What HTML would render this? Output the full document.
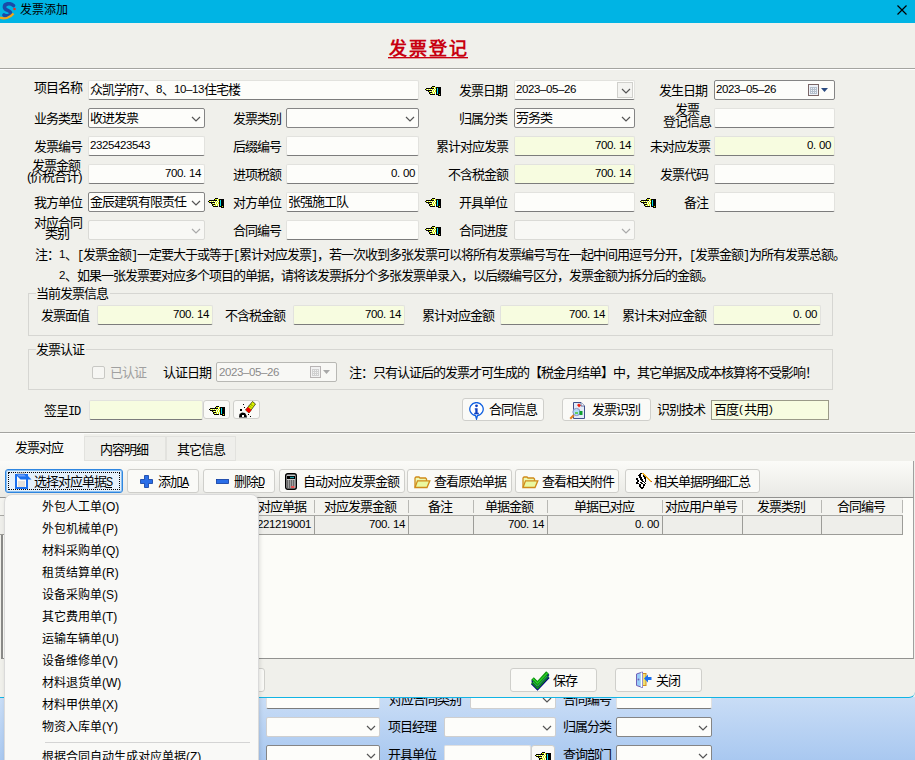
<!DOCTYPE html><html lang="zh-CN"><head><meta charset="utf-8"><style>
*{margin:0;padding:0;box-sizing:border-box}
html,body{width:915px;height:760px;overflow:hidden;background:#f0f0eb;font-family:"Liberation Sans",sans-serif;font-size:12px;line-height:12px;color:#000}
.a{position:absolute}
.t{white-space:nowrap;font-size:13px;line-height:12px;letter-spacing:-1px}
.m{font-family:"Liberation Mono",monospace;letter-spacing:-1.2px;font-size:12px;position:relative;top:0}
.n{font-size:11.5px;letter-spacing:-0.39px;position:relative;top:-1px}
.n.p{letter-spacing:2.8px}
.n.h{letter-spacing:0;padding:0 1.08px}
.n.sp{letter-spacing:2.8px}
.tb{border:1px solid #e2e2de;border-bottom:1px solid #7c7c7c;border-radius:2px}
.cb{border:1px solid #858585;border-radius:2px;background:#fdfdfa}
.cbd{border:1px solid #dadad6;border-radius:2px;background:#f8f8f5}
.btn{border:1px solid #cfcfcb;border-radius:3px;background:#fafaf7}
.btnf{border:1px solid #2f86e0;border-radius:3px;background:#e5f0fb;box-shadow:inset 0 0 0 1px #8cc0f0;outline:1px dotted #000;outline-offset:-4px}
.grp{border:1px solid #d6d6d2}
.menu{font-size:13px;line-height:13px;color:#000}
</style></head><body>
<div class="a " style="left:0px;top:697px;width:915px;height:63px;background:linear-gradient(#c9ddf6,#a9c8f0);"></div>
<div class="a " style="left:0px;top:0px;width:915px;height:698px;background:#f0f0eb;border-bottom:1px solid #12b4e4;border-bottom-right-radius:6px;"></div>
<div class="a " style="left:0px;top:0px;width:915px;height:23px;background:#00b4e4;"></div>
<svg class="a" style="left:0;top:2px" width="17" height="18" viewBox="0 0 17 18">
<path d="M13.5 3.5 C10 0.5 4 1.5 4.5 5.5 C5 9 11 8 10.5 11.5 C10 14 6 14.5 4 13" fill="none" stroke="#1a4aa8" stroke-width="3.6" stroke-linecap="round"/>
<path d="M0 15.5 C4 17.5 10 16 13.5 11.5" fill="none" stroke="#f0a818" stroke-width="2.2"/>
<circle cx="14.5" cy="7" r="1.3" fill="#e83020"/></svg>
<div class="a t" style="left:20px;top:4px;font-size:12px;letter-spacing:0">发票添加</div>
<svg class="a" style="left:896px;top:4px" width="13" height="13" viewBox="0 0 13 13"><path d="M1.5 1.5L10.5 10.5M10.5 1.5L1.5 10.5" stroke="#000" stroke-width="1.2"/></svg>
<div class="a" style="left:389px;top:39px;font-family:'Liberation Serif',serif;font-size:18px;line-height:20px;font-weight:bold;color:#c80010;letter-spacing:2px">发票登记</div>
<div class="a " style="left:388px;top:57px;width:80px;height:1px;background:#c80010;box-shadow:0 1px 0 rgba(200,0,16,0.35)"></div>
<div class="a " style="left:0px;top:68px;width:915px;height:1px;background:#a4a4a0;"></div>
<div class="a " style="left:0px;top:69px;width:915px;height:1px;background:#ffffff;"></div>
<div class="a t" style="left:34px;top:82px;">项目名称</div>
<div class="a tb" style="left:88px;top:80px;width:331px;height:20px;background:#fdfdfa;"><div class="a t" style="left:1px;top:3px">众凯学府<span class="n">7</span>、<span class="n">8</span>、<span class="n">10–13</span>住宅楼</div></div>
<div class="a" style="left:425px;top:86px;width:16px;height:10px"><svg class="a" style="left:0px;top:0px" width="16" height="10" viewBox="0 0 16 10" shape-rendering="crispEdges"><rect x="7" y="0" width="3" height="1" fill="#000"/><rect x="6" y="1" width="1" height="1" fill="#000"/><rect x="7" y="1" width="2" height="1" fill="#d4f000"/><rect x="9" y="1" width="1" height="1" fill="#fbfff0"/><rect x="10" y="1" width="1" height="1" fill="#d4f000"/><rect x="11" y="1" width="5" height="1" fill="#000"/><rect x="1" y="2" width="8" height="1" fill="#000"/><rect x="9" y="2" width="1" height="1" fill="#fbfff0"/><rect x="10" y="2" width="1" height="1" fill="#d4f000"/><rect x="11" y="2" width="1" height="1" fill="#000"/><rect x="12" y="2" width="1" height="1" fill="#00e0f0"/><rect x="13" y="2" width="3" height="1" fill="#000"/><rect x="0" y="3" width="1" height="1" fill="#000"/><rect x="1" y="3" width="1" height="1" fill="#d4f000"/><rect x="2" y="3" width="1" height="1" fill="#fbfff0"/><rect x="3" y="3" width="1" height="1" fill="#d4f000"/><rect x="4" y="3" width="1" height="1" fill="#fbfff0"/><rect x="5" y="3" width="1" height="1" fill="#d4f000"/><rect x="6" y="3" width="1" height="1" fill="#fbfff0"/><rect x="7" y="3" width="1" height="1" fill="#d4f000"/><rect x="8" y="3" width="1" height="1" fill="#fbfff0"/><rect x="9" y="3" width="1" height="1" fill="#d4f000"/><rect x="10" y="3" width="1" height="1" fill="#fbfff0"/><rect x="11" y="3" width="1" height="1" fill="#000"/><rect x="12" y="3" width="1" height="1" fill="#00e0f0"/><rect x="13" y="3" width="3" height="1" fill="#000"/><rect x="1" y="4" width="6" height="1" fill="#000"/><rect x="7" y="4" width="1" height="1" fill="#fbfff0"/><rect x="8" y="4" width="1" height="1" fill="#d4f000"/><rect x="9" y="4" width="1" height="1" fill="#fbfff0"/><rect x="10" y="4" width="1" height="1" fill="#d4f000"/><rect x="11" y="4" width="1" height="1" fill="#000"/><rect x="12" y="4" width="1" height="1" fill="#00e0f0"/><rect x="13" y="4" width="3" height="1" fill="#000"/><rect x="3" y="5" width="1" height="1" fill="#000"/><rect x="4" y="5" width="1" height="1" fill="#d4f000"/><rect x="5" y="5" width="1" height="1" fill="#fbfff0"/><rect x="6" y="5" width="1" height="1" fill="#d4f000"/><rect x="7" y="5" width="1" height="1" fill="#fbfff0"/><rect x="8" y="5" width="1" height="1" fill="#d4f000"/><rect x="9" y="5" width="1" height="1" fill="#fbfff0"/><rect x="10" y="5" width="1" height="1" fill="#d4f000"/><rect x="11" y="5" width="1" height="1" fill="#000"/><rect x="12" y="5" width="1" height="1" fill="#00e0f0"/><rect x="13" y="5" width="3" height="1" fill="#000"/><rect x="4" y="6" width="3" height="1" fill="#000"/><rect x="7" y="6" width="1" height="1" fill="#d4f000"/><rect x="8" y="6" width="1" height="1" fill="#fbfff0"/><rect x="9" y="6" width="1" height="1" fill="#d4f000"/><rect x="10" y="6" width="1" height="1" fill="#fbfff0"/><rect x="11" y="6" width="1" height="1" fill="#000"/><rect x="12" y="6" width="1" height="1" fill="#00e0f0"/><rect x="13" y="6" width="3" height="1" fill="#000"/><rect x="4" y="7" width="1" height="1" fill="#000"/><rect x="5" y="7" width="1" height="1" fill="#d4f000"/><rect x="6" y="7" width="1" height="1" fill="#fbfff0"/><rect x="7" y="7" width="1" height="1" fill="#d4f000"/><rect x="8" y="7" width="1" height="1" fill="#fbfff0"/><rect x="9" y="7" width="1" height="1" fill="#d4f000"/><rect x="10" y="7" width="1" height="1" fill="#fbfff0"/><rect x="11" y="7" width="1" height="1" fill="#000"/><rect x="12" y="7" width="1" height="1" fill="#00e0f0"/><rect x="13" y="7" width="3" height="1" fill="#000"/><rect x="5" y="8" width="5" height="1" fill="#000"/><rect x="11" y="8" width="3" height="1" fill="#000"/><rect x="14" y="8" width="1" height="1" fill="#d4f000"/><rect x="15" y="8" width="1" height="1" fill="#000"/><rect x="13" y="9" width="3" height="1" fill="#000"/></svg></div>
<div class="a t" style="left:459px;top:85px;">发票日期</div>
<div class="a tb" style="left:514px;top:80px;width:121px;height:20px;background:#fdfdfa;"><div class="a t" style="left:1px;top:3px"><span class="n">2023–05–26</span></div><div class="a" style="right:1px;top:1px;width:16px;height:16px;border:1px solid #d0d0cc;background:#f4f4f1"><svg class="a" style="left:3px;top:5px" width="10" height="6" viewBox="0 0 10 6"><path d="M1 1 L5 5 L9 1" fill="none" stroke="#555" stroke-width="1.2"/></svg></div></div>
<div class="a t" style="left:659px;top:85px;">发生日期</div>
<div class="a cb" style="left:714px;top:80px;width:121px;height:20px;"><div class="a t" style="left:1px;top:3px"><span class="n">2023–05–26</span></div><svg class="a" style="left:93px;top:3px" width="22" height="13" viewBox="0 0 22 13" shape-rendering="crispEdges"><rect x="0.5" y="0.5" width="10" height="11" fill="#eef2f8" stroke="#7a6666"/><rect x="2" y="3" width="7" height="7" fill="#b4bfcc"/><path d="M3 4h1M5 4h1M7 4h1M3 6h1M5 6h1M7 6h1M3 8h1M5 8h1M7 8h1" stroke="#eef2f8"/><path d="M13 4h7l-3.5 4z" fill="#2a4a80" shape-rendering="auto"/></svg></div>
<div class="a t" style="left:34px;top:113px;">业务类型</div>
<div class="a cb" style="left:88px;top:108px;width:117px;height:20px;"><div class="a t" style="left:1px;top:3px;width:97px;overflow:hidden">收进发票</div><svg class="a" style="right:3px;top:7px" width="10" height="6" viewBox="0 0 10 6"><path d="M1 1 L5 5 L9 1" fill="none" stroke="#555" stroke-width="1.2"/></svg></div>
<div class="a t" style="left:233px;top:113px;">发票类别</div>
<div class="a cb" style="left:286px;top:108px;width:133px;height:20px;"><svg class="a" style="right:3px;top:7px" width="10" height="6" viewBox="0 0 10 6"><path d="M1 1 L5 5 L9 1" fill="none" stroke="#555" stroke-width="1.2"/></svg></div>
<div class="a t" style="left:459px;top:113px;">归属分类</div>
<div class="a cb" style="left:514px;top:108px;width:121px;height:20px;"><div class="a t" style="left:1px;top:3px;width:101px;overflow:hidden">劳务类</div><svg class="a" style="right:3px;top:7px" width="10" height="6" viewBox="0 0 10 6"><path d="M1 1 L5 5 L9 1" fill="none" stroke="#555" stroke-width="1.2"/></svg></div>
<div class="a t" style="left:675px;top:104px;">发票</div>
<div class="a t" style="left:663px;top:116px;">登记信息</div>
<div class="a tb" style="left:714px;top:108px;width:121px;height:20px;background:#fdfdfa;"></div>
<div class="a t" style="left:34px;top:141px;">发票编号</div>
<div class="a tb" style="left:88px;top:136px;width:117px;height:20px;background:#fdfdfa;"><div class="a t" style="left:1px;top:3px"><span class="n">2325423543</span></div></div>
<div class="a t" style="left:233px;top:141px;">后缀编号</div>
<div class="a tb" style="left:286px;top:136px;width:133px;height:20px;background:#fdfdfa;"></div>
<div class="a t" style="left:436px;top:141px;">累计对应发票</div>
<div class="a tb" style="left:514px;top:136px;width:121px;height:20px;background:#f7fce0;"><div class="a t" style="right:3px;top:3px"><span class="n">700</span><span class="n p">.</span><span class="n">14</span></div></div>
<div class="a t" style="left:650px;top:141px;">未对应发票</div>
<div class="a tb" style="left:714px;top:136px;width:121px;height:20px;background:#f7fce0;"><div class="a t" style="right:3px;top:3px"><span class="n">0</span><span class="n p">.</span><span class="n">00</span></div></div>
<div class="a t" style="left:32px;top:160px;">发票金额</div>
<div class="a t" style="left:27px;top:171px;">(价税合计)</div>
<div class="a tb" style="left:88px;top:164px;width:117px;height:20px;background:#fdfdfa;"><div class="a t" style="right:3px;top:3px"><span class="n">700</span><span class="n p">.</span><span class="n">14</span></div></div>
<div class="a t" style="left:233px;top:169px;">进项税额</div>
<div class="a tb" style="left:286px;top:164px;width:133px;height:20px;background:#fdfdfa;"><div class="a t" style="right:3px;top:3px"><span class="n">0</span><span class="n p">.</span><span class="n">00</span></div></div>
<div class="a t" style="left:448px;top:169px;">不含税金额</div>
<div class="a tb" style="left:514px;top:164px;width:121px;height:20px;background:#f7fce0;"><div class="a t" style="right:3px;top:3px"><span class="n">700</span><span class="n p">.</span><span class="n">14</span></div></div>
<div class="a t" style="left:660px;top:169px;">发票代码</div>
<div class="a tb" style="left:714px;top:164px;width:121px;height:20px;background:#fdfdfa;"></div>
<div class="a t" style="left:34px;top:197px;">我方单位</div>
<div class="a cb" style="left:88px;top:192px;width:117px;height:20px;"><div class="a t" style="left:1px;top:3px;width:97px;overflow:hidden">金辰建筑有限责任</div><svg class="a" style="right:3px;top:7px" width="10" height="6" viewBox="0 0 10 6"><path d="M1 1 L5 5 L9 1" fill="none" stroke="#555" stroke-width="1.2"/></svg></div>
<div class="a" style="left:208px;top:198px;width:16px;height:10px"><svg class="a" style="left:0px;top:0px" width="16" height="10" viewBox="0 0 16 10" shape-rendering="crispEdges"><rect x="7" y="0" width="3" height="1" fill="#000"/><rect x="6" y="1" width="1" height="1" fill="#000"/><rect x="7" y="1" width="2" height="1" fill="#d4f000"/><rect x="9" y="1" width="1" height="1" fill="#fbfff0"/><rect x="10" y="1" width="1" height="1" fill="#d4f000"/><rect x="11" y="1" width="5" height="1" fill="#000"/><rect x="1" y="2" width="8" height="1" fill="#000"/><rect x="9" y="2" width="1" height="1" fill="#fbfff0"/><rect x="10" y="2" width="1" height="1" fill="#d4f000"/><rect x="11" y="2" width="1" height="1" fill="#000"/><rect x="12" y="2" width="1" height="1" fill="#00e0f0"/><rect x="13" y="2" width="3" height="1" fill="#000"/><rect x="0" y="3" width="1" height="1" fill="#000"/><rect x="1" y="3" width="1" height="1" fill="#d4f000"/><rect x="2" y="3" width="1" height="1" fill="#fbfff0"/><rect x="3" y="3" width="1" height="1" fill="#d4f000"/><rect x="4" y="3" width="1" height="1" fill="#fbfff0"/><rect x="5" y="3" width="1" height="1" fill="#d4f000"/><rect x="6" y="3" width="1" height="1" fill="#fbfff0"/><rect x="7" y="3" width="1" height="1" fill="#d4f000"/><rect x="8" y="3" width="1" height="1" fill="#fbfff0"/><rect x="9" y="3" width="1" height="1" fill="#d4f000"/><rect x="10" y="3" width="1" height="1" fill="#fbfff0"/><rect x="11" y="3" width="1" height="1" fill="#000"/><rect x="12" y="3" width="1" height="1" fill="#00e0f0"/><rect x="13" y="3" width="3" height="1" fill="#000"/><rect x="1" y="4" width="6" height="1" fill="#000"/><rect x="7" y="4" width="1" height="1" fill="#fbfff0"/><rect x="8" y="4" width="1" height="1" fill="#d4f000"/><rect x="9" y="4" width="1" height="1" fill="#fbfff0"/><rect x="10" y="4" width="1" height="1" fill="#d4f000"/><rect x="11" y="4" width="1" height="1" fill="#000"/><rect x="12" y="4" width="1" height="1" fill="#00e0f0"/><rect x="13" y="4" width="3" height="1" fill="#000"/><rect x="3" y="5" width="1" height="1" fill="#000"/><rect x="4" y="5" width="1" height="1" fill="#d4f000"/><rect x="5" y="5" width="1" height="1" fill="#fbfff0"/><rect x="6" y="5" width="1" height="1" fill="#d4f000"/><rect x="7" y="5" width="1" height="1" fill="#fbfff0"/><rect x="8" y="5" width="1" height="1" fill="#d4f000"/><rect x="9" y="5" width="1" height="1" fill="#fbfff0"/><rect x="10" y="5" width="1" height="1" fill="#d4f000"/><rect x="11" y="5" width="1" height="1" fill="#000"/><rect x="12" y="5" width="1" height="1" fill="#00e0f0"/><rect x="13" y="5" width="3" height="1" fill="#000"/><rect x="4" y="6" width="3" height="1" fill="#000"/><rect x="7" y="6" width="1" height="1" fill="#d4f000"/><rect x="8" y="6" width="1" height="1" fill="#fbfff0"/><rect x="9" y="6" width="1" height="1" fill="#d4f000"/><rect x="10" y="6" width="1" height="1" fill="#fbfff0"/><rect x="11" y="6" width="1" height="1" fill="#000"/><rect x="12" y="6" width="1" height="1" fill="#00e0f0"/><rect x="13" y="6" width="3" height="1" fill="#000"/><rect x="4" y="7" width="1" height="1" fill="#000"/><rect x="5" y="7" width="1" height="1" fill="#d4f000"/><rect x="6" y="7" width="1" height="1" fill="#fbfff0"/><rect x="7" y="7" width="1" height="1" fill="#d4f000"/><rect x="8" y="7" width="1" height="1" fill="#fbfff0"/><rect x="9" y="7" width="1" height="1" fill="#d4f000"/><rect x="10" y="7" width="1" height="1" fill="#fbfff0"/><rect x="11" y="7" width="1" height="1" fill="#000"/><rect x="12" y="7" width="1" height="1" fill="#00e0f0"/><rect x="13" y="7" width="3" height="1" fill="#000"/><rect x="5" y="8" width="5" height="1" fill="#000"/><rect x="11" y="8" width="3" height="1" fill="#000"/><rect x="14" y="8" width="1" height="1" fill="#d4f000"/><rect x="15" y="8" width="1" height="1" fill="#000"/><rect x="13" y="9" width="3" height="1" fill="#000"/></svg></div>
<div class="a t" style="left:233px;top:197px;">对方单位</div>
<div class="a tb" style="left:286px;top:192px;width:133px;height:20px;background:#fdfdfa;"><div class="a t" style="left:1px;top:3px">张强施工队</div></div>
<div class="a" style="left:425px;top:198px;width:16px;height:10px"><svg class="a" style="left:0px;top:0px" width="16" height="10" viewBox="0 0 16 10" shape-rendering="crispEdges"><rect x="7" y="0" width="3" height="1" fill="#000"/><rect x="6" y="1" width="1" height="1" fill="#000"/><rect x="7" y="1" width="2" height="1" fill="#d4f000"/><rect x="9" y="1" width="1" height="1" fill="#fbfff0"/><rect x="10" y="1" width="1" height="1" fill="#d4f000"/><rect x="11" y="1" width="5" height="1" fill="#000"/><rect x="1" y="2" width="8" height="1" fill="#000"/><rect x="9" y="2" width="1" height="1" fill="#fbfff0"/><rect x="10" y="2" width="1" height="1" fill="#d4f000"/><rect x="11" y="2" width="1" height="1" fill="#000"/><rect x="12" y="2" width="1" height="1" fill="#00e0f0"/><rect x="13" y="2" width="3" height="1" fill="#000"/><rect x="0" y="3" width="1" height="1" fill="#000"/><rect x="1" y="3" width="1" height="1" fill="#d4f000"/><rect x="2" y="3" width="1" height="1" fill="#fbfff0"/><rect x="3" y="3" width="1" height="1" fill="#d4f000"/><rect x="4" y="3" width="1" height="1" fill="#fbfff0"/><rect x="5" y="3" width="1" height="1" fill="#d4f000"/><rect x="6" y="3" width="1" height="1" fill="#fbfff0"/><rect x="7" y="3" width="1" height="1" fill="#d4f000"/><rect x="8" y="3" width="1" height="1" fill="#fbfff0"/><rect x="9" y="3" width="1" height="1" fill="#d4f000"/><rect x="10" y="3" width="1" height="1" fill="#fbfff0"/><rect x="11" y="3" width="1" height="1" fill="#000"/><rect x="12" y="3" width="1" height="1" fill="#00e0f0"/><rect x="13" y="3" width="3" height="1" fill="#000"/><rect x="1" y="4" width="6" height="1" fill="#000"/><rect x="7" y="4" width="1" height="1" fill="#fbfff0"/><rect x="8" y="4" width="1" height="1" fill="#d4f000"/><rect x="9" y="4" width="1" height="1" fill="#fbfff0"/><rect x="10" y="4" width="1" height="1" fill="#d4f000"/><rect x="11" y="4" width="1" height="1" fill="#000"/><rect x="12" y="4" width="1" height="1" fill="#00e0f0"/><rect x="13" y="4" width="3" height="1" fill="#000"/><rect x="3" y="5" width="1" height="1" fill="#000"/><rect x="4" y="5" width="1" height="1" fill="#d4f000"/><rect x="5" y="5" width="1" height="1" fill="#fbfff0"/><rect x="6" y="5" width="1" height="1" fill="#d4f000"/><rect x="7" y="5" width="1" height="1" fill="#fbfff0"/><rect x="8" y="5" width="1" height="1" fill="#d4f000"/><rect x="9" y="5" width="1" height="1" fill="#fbfff0"/><rect x="10" y="5" width="1" height="1" fill="#d4f000"/><rect x="11" y="5" width="1" height="1" fill="#000"/><rect x="12" y="5" width="1" height="1" fill="#00e0f0"/><rect x="13" y="5" width="3" height="1" fill="#000"/><rect x="4" y="6" width="3" height="1" fill="#000"/><rect x="7" y="6" width="1" height="1" fill="#d4f000"/><rect x="8" y="6" width="1" height="1" fill="#fbfff0"/><rect x="9" y="6" width="1" height="1" fill="#d4f000"/><rect x="10" y="6" width="1" height="1" fill="#fbfff0"/><rect x="11" y="6" width="1" height="1" fill="#000"/><rect x="12" y="6" width="1" height="1" fill="#00e0f0"/><rect x="13" y="6" width="3" height="1" fill="#000"/><rect x="4" y="7" width="1" height="1" fill="#000"/><rect x="5" y="7" width="1" height="1" fill="#d4f000"/><rect x="6" y="7" width="1" height="1" fill="#fbfff0"/><rect x="7" y="7" width="1" height="1" fill="#d4f000"/><rect x="8" y="7" width="1" height="1" fill="#fbfff0"/><rect x="9" y="7" width="1" height="1" fill="#d4f000"/><rect x="10" y="7" width="1" height="1" fill="#fbfff0"/><rect x="11" y="7" width="1" height="1" fill="#000"/><rect x="12" y="7" width="1" height="1" fill="#00e0f0"/><rect x="13" y="7" width="3" height="1" fill="#000"/><rect x="5" y="8" width="5" height="1" fill="#000"/><rect x="11" y="8" width="3" height="1" fill="#000"/><rect x="14" y="8" width="1" height="1" fill="#d4f000"/><rect x="15" y="8" width="1" height="1" fill="#000"/><rect x="13" y="9" width="3" height="1" fill="#000"/></svg></div>
<div class="a t" style="left:459px;top:197px;">开具单位</div>
<div class="a tb" style="left:514px;top:192px;width:121px;height:20px;background:#fdfdfa;"></div>
<div class="a" style="left:640px;top:198px;width:16px;height:10px"><svg class="a" style="left:0px;top:0px" width="16" height="10" viewBox="0 0 16 10" shape-rendering="crispEdges"><rect x="7" y="0" width="3" height="1" fill="#000"/><rect x="6" y="1" width="1" height="1" fill="#000"/><rect x="7" y="1" width="2" height="1" fill="#d4f000"/><rect x="9" y="1" width="1" height="1" fill="#fbfff0"/><rect x="10" y="1" width="1" height="1" fill="#d4f000"/><rect x="11" y="1" width="5" height="1" fill="#000"/><rect x="1" y="2" width="8" height="1" fill="#000"/><rect x="9" y="2" width="1" height="1" fill="#fbfff0"/><rect x="10" y="2" width="1" height="1" fill="#d4f000"/><rect x="11" y="2" width="1" height="1" fill="#000"/><rect x="12" y="2" width="1" height="1" fill="#00e0f0"/><rect x="13" y="2" width="3" height="1" fill="#000"/><rect x="0" y="3" width="1" height="1" fill="#000"/><rect x="1" y="3" width="1" height="1" fill="#d4f000"/><rect x="2" y="3" width="1" height="1" fill="#fbfff0"/><rect x="3" y="3" width="1" height="1" fill="#d4f000"/><rect x="4" y="3" width="1" height="1" fill="#fbfff0"/><rect x="5" y="3" width="1" height="1" fill="#d4f000"/><rect x="6" y="3" width="1" height="1" fill="#fbfff0"/><rect x="7" y="3" width="1" height="1" fill="#d4f000"/><rect x="8" y="3" width="1" height="1" fill="#fbfff0"/><rect x="9" y="3" width="1" height="1" fill="#d4f000"/><rect x="10" y="3" width="1" height="1" fill="#fbfff0"/><rect x="11" y="3" width="1" height="1" fill="#000"/><rect x="12" y="3" width="1" height="1" fill="#00e0f0"/><rect x="13" y="3" width="3" height="1" fill="#000"/><rect x="1" y="4" width="6" height="1" fill="#000"/><rect x="7" y="4" width="1" height="1" fill="#fbfff0"/><rect x="8" y="4" width="1" height="1" fill="#d4f000"/><rect x="9" y="4" width="1" height="1" fill="#fbfff0"/><rect x="10" y="4" width="1" height="1" fill="#d4f000"/><rect x="11" y="4" width="1" height="1" fill="#000"/><rect x="12" y="4" width="1" height="1" fill="#00e0f0"/><rect x="13" y="4" width="3" height="1" fill="#000"/><rect x="3" y="5" width="1" height="1" fill="#000"/><rect x="4" y="5" width="1" height="1" fill="#d4f000"/><rect x="5" y="5" width="1" height="1" fill="#fbfff0"/><rect x="6" y="5" width="1" height="1" fill="#d4f000"/><rect x="7" y="5" width="1" height="1" fill="#fbfff0"/><rect x="8" y="5" width="1" height="1" fill="#d4f000"/><rect x="9" y="5" width="1" height="1" fill="#fbfff0"/><rect x="10" y="5" width="1" height="1" fill="#d4f000"/><rect x="11" y="5" width="1" height="1" fill="#000"/><rect x="12" y="5" width="1" height="1" fill="#00e0f0"/><rect x="13" y="5" width="3" height="1" fill="#000"/><rect x="4" y="6" width="3" height="1" fill="#000"/><rect x="7" y="6" width="1" height="1" fill="#d4f000"/><rect x="8" y="6" width="1" height="1" fill="#fbfff0"/><rect x="9" y="6" width="1" height="1" fill="#d4f000"/><rect x="10" y="6" width="1" height="1" fill="#fbfff0"/><rect x="11" y="6" width="1" height="1" fill="#000"/><rect x="12" y="6" width="1" height="1" fill="#00e0f0"/><rect x="13" y="6" width="3" height="1" fill="#000"/><rect x="4" y="7" width="1" height="1" fill="#000"/><rect x="5" y="7" width="1" height="1" fill="#d4f000"/><rect x="6" y="7" width="1" height="1" fill="#fbfff0"/><rect x="7" y="7" width="1" height="1" fill="#d4f000"/><rect x="8" y="7" width="1" height="1" fill="#fbfff0"/><rect x="9" y="7" width="1" height="1" fill="#d4f000"/><rect x="10" y="7" width="1" height="1" fill="#fbfff0"/><rect x="11" y="7" width="1" height="1" fill="#000"/><rect x="12" y="7" width="1" height="1" fill="#00e0f0"/><rect x="13" y="7" width="3" height="1" fill="#000"/><rect x="5" y="8" width="5" height="1" fill="#000"/><rect x="11" y="8" width="3" height="1" fill="#000"/><rect x="14" y="8" width="1" height="1" fill="#d4f000"/><rect x="15" y="8" width="1" height="1" fill="#000"/><rect x="13" y="9" width="3" height="1" fill="#000"/></svg></div>
<div class="a t" style="left:684px;top:197px;">备注</div>
<div class="a tb" style="left:714px;top:192px;width:121px;height:20px;background:#fdfdfa;"></div>
<div class="a t" style="left:34px;top:217px;">对应合同</div>
<div class="a t" style="left:45px;top:228px;">类别</div>
<div class="a cbd" style="left:88px;top:220px;width:117px;height:20px;"><svg class="a" style="right:3px;top:7px" width="10" height="6" viewBox="0 0 10 6"><path d="M1 1 L5 5 L9 1" fill="none" stroke="#aaa" stroke-width="1.2"/></svg></div>
<div class="a t" style="left:233px;top:225px;">合同编号</div>
<div class="a tb" style="left:286px;top:220px;width:133px;height:20px;background:#fdfdfa;"></div>
<div class="a" style="left:425px;top:226px;width:16px;height:10px"><svg class="a" style="left:0px;top:0px" width="16" height="10" viewBox="0 0 16 10" shape-rendering="crispEdges"><rect x="7" y="0" width="3" height="1" fill="#000"/><rect x="6" y="1" width="1" height="1" fill="#000"/><rect x="7" y="1" width="2" height="1" fill="#d4f000"/><rect x="9" y="1" width="1" height="1" fill="#fbfff0"/><rect x="10" y="1" width="1" height="1" fill="#d4f000"/><rect x="11" y="1" width="5" height="1" fill="#000"/><rect x="1" y="2" width="8" height="1" fill="#000"/><rect x="9" y="2" width="1" height="1" fill="#fbfff0"/><rect x="10" y="2" width="1" height="1" fill="#d4f000"/><rect x="11" y="2" width="1" height="1" fill="#000"/><rect x="12" y="2" width="1" height="1" fill="#00e0f0"/><rect x="13" y="2" width="3" height="1" fill="#000"/><rect x="0" y="3" width="1" height="1" fill="#000"/><rect x="1" y="3" width="1" height="1" fill="#d4f000"/><rect x="2" y="3" width="1" height="1" fill="#fbfff0"/><rect x="3" y="3" width="1" height="1" fill="#d4f000"/><rect x="4" y="3" width="1" height="1" fill="#fbfff0"/><rect x="5" y="3" width="1" height="1" fill="#d4f000"/><rect x="6" y="3" width="1" height="1" fill="#fbfff0"/><rect x="7" y="3" width="1" height="1" fill="#d4f000"/><rect x="8" y="3" width="1" height="1" fill="#fbfff0"/><rect x="9" y="3" width="1" height="1" fill="#d4f000"/><rect x="10" y="3" width="1" height="1" fill="#fbfff0"/><rect x="11" y="3" width="1" height="1" fill="#000"/><rect x="12" y="3" width="1" height="1" fill="#00e0f0"/><rect x="13" y="3" width="3" height="1" fill="#000"/><rect x="1" y="4" width="6" height="1" fill="#000"/><rect x="7" y="4" width="1" height="1" fill="#fbfff0"/><rect x="8" y="4" width="1" height="1" fill="#d4f000"/><rect x="9" y="4" width="1" height="1" fill="#fbfff0"/><rect x="10" y="4" width="1" height="1" fill="#d4f000"/><rect x="11" y="4" width="1" height="1" fill="#000"/><rect x="12" y="4" width="1" height="1" fill="#00e0f0"/><rect x="13" y="4" width="3" height="1" fill="#000"/><rect x="3" y="5" width="1" height="1" fill="#000"/><rect x="4" y="5" width="1" height="1" fill="#d4f000"/><rect x="5" y="5" width="1" height="1" fill="#fbfff0"/><rect x="6" y="5" width="1" height="1" fill="#d4f000"/><rect x="7" y="5" width="1" height="1" fill="#fbfff0"/><rect x="8" y="5" width="1" height="1" fill="#d4f000"/><rect x="9" y="5" width="1" height="1" fill="#fbfff0"/><rect x="10" y="5" width="1" height="1" fill="#d4f000"/><rect x="11" y="5" width="1" height="1" fill="#000"/><rect x="12" y="5" width="1" height="1" fill="#00e0f0"/><rect x="13" y="5" width="3" height="1" fill="#000"/><rect x="4" y="6" width="3" height="1" fill="#000"/><rect x="7" y="6" width="1" height="1" fill="#d4f000"/><rect x="8" y="6" width="1" height="1" fill="#fbfff0"/><rect x="9" y="6" width="1" height="1" fill="#d4f000"/><rect x="10" y="6" width="1" height="1" fill="#fbfff0"/><rect x="11" y="6" width="1" height="1" fill="#000"/><rect x="12" y="6" width="1" height="1" fill="#00e0f0"/><rect x="13" y="6" width="3" height="1" fill="#000"/><rect x="4" y="7" width="1" height="1" fill="#000"/><rect x="5" y="7" width="1" height="1" fill="#d4f000"/><rect x="6" y="7" width="1" height="1" fill="#fbfff0"/><rect x="7" y="7" width="1" height="1" fill="#d4f000"/><rect x="8" y="7" width="1" height="1" fill="#fbfff0"/><rect x="9" y="7" width="1" height="1" fill="#d4f000"/><rect x="10" y="7" width="1" height="1" fill="#fbfff0"/><rect x="11" y="7" width="1" height="1" fill="#000"/><rect x="12" y="7" width="1" height="1" fill="#00e0f0"/><rect x="13" y="7" width="3" height="1" fill="#000"/><rect x="5" y="8" width="5" height="1" fill="#000"/><rect x="11" y="8" width="3" height="1" fill="#000"/><rect x="14" y="8" width="1" height="1" fill="#d4f000"/><rect x="15" y="8" width="1" height="1" fill="#000"/><rect x="13" y="9" width="3" height="1" fill="#000"/></svg></div>
<div class="a t" style="left:459px;top:225px;">合同进度</div>
<div class="a cbd" style="left:514px;top:220px;width:121px;height:20px;"><svg class="a" style="right:3px;top:7px" width="10" height="6" viewBox="0 0 10 6"><path d="M1 1 L5 5 L9 1" fill="none" stroke="#aaa" stroke-width="1.2"/></svg></div>
<div class="a t" style="left:35px;top:249px;">注：<span class="n">1</span>、<span class="m">[</span>发票金额<span class="m">]</span>一定要大于或等于<span class="m">[</span>累计对应发票<span class="m">]</span>，若一次收到多张发票可以将所有发票编号写在一起中间用逗号分开，<span class="m">[</span>发票金额<span class="m">]</span>为所有发票总额。</div>
<div class="a t" style="left:59px;top:270px;"><span class="n">2</span>、如果一张发票要对应多个项目的单据，请将该发票拆分个多张发票单录入，以后缀编号区分，发票金额为拆分后的金额。</div>
<div class="a grp" style="left:28px;top:293px;width:805px;height:43px;"></div>
<div class="a t" style="left:36px;top:288px;padding:0 2px 0 0;background:#f0f0eb">当前发票信息</div>
<div class="a t" style="left:41px;top:310px;">发票面值</div>
<div class="a tb" style="left:97px;top:305px;width:116px;height:20px;background:#f7fce0;"><div class="a t" style="right:3px;top:3px"><span class="n">700</span><span class="n p">.</span><span class="n">14</span></div></div>
<div class="a t" style="left:225px;top:310px;">不含税金额</div>
<div class="a tb" style="left:293px;top:305px;width:112px;height:20px;background:#f7fce0;"><div class="a t" style="right:3px;top:3px"><span class="n">700</span><span class="n p">.</span><span class="n">14</span></div></div>
<div class="a t" style="left:422px;top:310px;">累计对应金额</div>
<div class="a tb" style="left:500px;top:305px;width:109px;height:20px;background:#f7fce0;"><div class="a t" style="right:3px;top:3px"><span class="n">700</span><span class="n p">.</span><span class="n">14</span></div></div>
<div class="a t" style="left:622px;top:310px;">累计未对应金额</div>
<div class="a tb" style="left:713px;top:305px;width:108px;height:20px;background:#f7fce0;"><div class="a t" style="right:3px;top:3px"><span class="n">0</span><span class="n p">.</span><span class="n">00</span></div></div>
<div class="a grp" style="left:28px;top:349px;width:805px;height:41px;"></div>
<div class="a t" style="left:36px;top:344px;padding:0 2px 0 0;background:#f0f0eb">发票认证</div>
<div class="a " style="left:92px;top:366px;width:13px;height:13px;border:1px solid #c8c8c4;border-radius:2px;background:#f6f6f3;"></div>
<div class="a t" style="left:110px;top:367px;color:#a0a0a0;">已认证</div>
<div class="a t" style="left:163px;top:367px;">认证日期</div>
<div class="a " style="left:216px;top:362px;width:121px;height:20px;background:#f8f8f5;border:1px solid #b8b8b4;border-radius:2px;"><div class="a t" style="left:2px;top:4px;color:#8a8a8a"><span class="n">2023–05–26</span></div><svg class="a" style="left:93px;top:3px" width="22" height="13" viewBox="0 0 22 13" shape-rendering="crispEdges"><rect x="0.5" y="0.5" width="10" height="11" fill="#f2f2f2" stroke="#b8b4b4"/><rect x="2" y="3" width="7" height="7" fill="#d0d0d0"/><path d="M3 4h1M5 4h1M7 4h1M3 6h1M5 6h1M7 6h1M3 8h1M5 8h1M7 8h1" stroke="#f2f2f2"/><path d="M13 4h7l-3.5 4z" fill="#a8a8a8" shape-rendering="auto"/></svg></div>
<div class="a t" style="left:349px;top:367px;">注：只有认证后的发票才可生成的【税金月结单】中，其它单据及成本核算将不受影响！</div>
<div class="a t" style="left:44px;top:405px;">签呈<span class="m">I</span><span class="m">D</span></div>
<div class="a tb" style="left:89px;top:400px;width:114px;height:20px;background:#f7fce0;"></div>
<div class="a btn" style="left:203px;top:400px;width:27px;height:19px;"><div class="a" style="left:5px;top:5px;width:16px;height:10px"><svg class="a" style="left:0px;top:0px" width="16" height="10" viewBox="0 0 16 10" shape-rendering="crispEdges"><rect x="7" y="0" width="3" height="1" fill="#000"/><rect x="6" y="1" width="1" height="1" fill="#000"/><rect x="7" y="1" width="2" height="1" fill="#d4f000"/><rect x="9" y="1" width="1" height="1" fill="#fbfff0"/><rect x="10" y="1" width="1" height="1" fill="#d4f000"/><rect x="11" y="1" width="5" height="1" fill="#000"/><rect x="1" y="2" width="8" height="1" fill="#000"/><rect x="9" y="2" width="1" height="1" fill="#fbfff0"/><rect x="10" y="2" width="1" height="1" fill="#d4f000"/><rect x="11" y="2" width="1" height="1" fill="#000"/><rect x="12" y="2" width="1" height="1" fill="#00e0f0"/><rect x="13" y="2" width="3" height="1" fill="#000"/><rect x="0" y="3" width="1" height="1" fill="#000"/><rect x="1" y="3" width="1" height="1" fill="#d4f000"/><rect x="2" y="3" width="1" height="1" fill="#fbfff0"/><rect x="3" y="3" width="1" height="1" fill="#d4f000"/><rect x="4" y="3" width="1" height="1" fill="#fbfff0"/><rect x="5" y="3" width="1" height="1" fill="#d4f000"/><rect x="6" y="3" width="1" height="1" fill="#fbfff0"/><rect x="7" y="3" width="1" height="1" fill="#d4f000"/><rect x="8" y="3" width="1" height="1" fill="#fbfff0"/><rect x="9" y="3" width="1" height="1" fill="#d4f000"/><rect x="10" y="3" width="1" height="1" fill="#fbfff0"/><rect x="11" y="3" width="1" height="1" fill="#000"/><rect x="12" y="3" width="1" height="1" fill="#00e0f0"/><rect x="13" y="3" width="3" height="1" fill="#000"/><rect x="1" y="4" width="6" height="1" fill="#000"/><rect x="7" y="4" width="1" height="1" fill="#fbfff0"/><rect x="8" y="4" width="1" height="1" fill="#d4f000"/><rect x="9" y="4" width="1" height="1" fill="#fbfff0"/><rect x="10" y="4" width="1" height="1" fill="#d4f000"/><rect x="11" y="4" width="1" height="1" fill="#000"/><rect x="12" y="4" width="1" height="1" fill="#00e0f0"/><rect x="13" y="4" width="3" height="1" fill="#000"/><rect x="3" y="5" width="1" height="1" fill="#000"/><rect x="4" y="5" width="1" height="1" fill="#d4f000"/><rect x="5" y="5" width="1" height="1" fill="#fbfff0"/><rect x="6" y="5" width="1" height="1" fill="#d4f000"/><rect x="7" y="5" width="1" height="1" fill="#fbfff0"/><rect x="8" y="5" width="1" height="1" fill="#d4f000"/><rect x="9" y="5" width="1" height="1" fill="#fbfff0"/><rect x="10" y="5" width="1" height="1" fill="#d4f000"/><rect x="11" y="5" width="1" height="1" fill="#000"/><rect x="12" y="5" width="1" height="1" fill="#00e0f0"/><rect x="13" y="5" width="3" height="1" fill="#000"/><rect x="4" y="6" width="3" height="1" fill="#000"/><rect x="7" y="6" width="1" height="1" fill="#d4f000"/><rect x="8" y="6" width="1" height="1" fill="#fbfff0"/><rect x="9" y="6" width="1" height="1" fill="#d4f000"/><rect x="10" y="6" width="1" height="1" fill="#fbfff0"/><rect x="11" y="6" width="1" height="1" fill="#000"/><rect x="12" y="6" width="1" height="1" fill="#00e0f0"/><rect x="13" y="6" width="3" height="1" fill="#000"/><rect x="4" y="7" width="1" height="1" fill="#000"/><rect x="5" y="7" width="1" height="1" fill="#d4f000"/><rect x="6" y="7" width="1" height="1" fill="#fbfff0"/><rect x="7" y="7" width="1" height="1" fill="#d4f000"/><rect x="8" y="7" width="1" height="1" fill="#fbfff0"/><rect x="9" y="7" width="1" height="1" fill="#d4f000"/><rect x="10" y="7" width="1" height="1" fill="#fbfff0"/><rect x="11" y="7" width="1" height="1" fill="#000"/><rect x="12" y="7" width="1" height="1" fill="#00e0f0"/><rect x="13" y="7" width="3" height="1" fill="#000"/><rect x="5" y="8" width="5" height="1" fill="#000"/><rect x="11" y="8" width="3" height="1" fill="#000"/><rect x="14" y="8" width="1" height="1" fill="#d4f000"/><rect x="15" y="8" width="1" height="1" fill="#000"/><rect x="13" y="9" width="3" height="1" fill="#000"/></svg></div></div>
<div class="a btn" style="left:233px;top:400px;width:27px;height:19px;"><svg class="a" style="left:3px;top:0px" width="20" height="18" viewBox="0 0 20 18" shape-rendering="crispEdges"><path d="M15.5 0.5 L18.5 3 L12 12 L8.5 9 Z" fill="#d8f000" stroke="#202000" stroke-width="0.7" shape-rendering="auto"/><path d="M11 6 L14.5 9 L12 12 L8.5 9 Z" fill="#f00000" shape-rendering="auto"/><path d="M12 4.5l2 2M13.5 3l2 2" stroke="#405000" stroke-width="0.6" shape-rendering="auto"/><path d="M2 16.5 L2.5 13 L5 11.5 L8 12 L9.5 14.5 L10 16.5 Z" fill="#000" shape-rendering="auto"/><rect x="5" y="13.5" width="2" height="2" fill="#fff"/><rect x="6" y="3" width="1" height="1" fill="#000"/><rect x="7" y="6" width="1" height="1" fill="#000"/><rect x="3" y="8" width="2" height="2" fill="#000"/><rect x="11" y="13" width="1" height="1" fill="#000"/><rect x="13" y="15" width="1" height="1" fill="#000"/></svg></div>
<div class="a btn" style="left:462px;top:398px;width:82px;height:23px;"><svg class="a" style="left:5px;top:3px" width="17" height="18" viewBox="0 0 17 18"><path d="M7.5 13.5 A6.7 6.5 0 1 1 9.5 13.5 L8.5 17 Z" fill="#fff" stroke="#1060e0" stroke-width="1.3"/><circle cx="8.5" cy="3.8" r="1.4" fill="#1040c0"/><path d="M6.8 6.2h2.8v4.6h1.2v1.4h-4.6v-1.4h1.1v-3.2h-0.5z" fill="#1040c0"/></svg><div class="a t" style="left:26px;top:5px">合同信息</div></div>
<div class="a btn" style="left:562px;top:398px;width:89px;height:23px;"><svg class="a" style="left:6px;top:3px" width="20" height="18" viewBox="0 0 20 18"><path d="M4.5 0.5 H12 L15.5 4 V16.5 H4.5 Z" fill="#e4ecf8" stroke="#40508a"/><path d="M12 0.5 V4 H15.5" fill="#fff" stroke="#40508a" stroke-width="0.8"/><path d="M8 3 L10 1.5 L12 3.5 L10 5.5 Z" fill="#f02010"/><circle cx="7.5" cy="10" r="3.6" fill="#b0dcf8" stroke="#8890c0"/><rect x="6" y="10" width="3" height="2" fill="#60d060"/><rect x="10.5" y="9" width="3" height="4" fill="#10a030"/><path d="M0.5 16 L4 12.5 L5.5 14 L2 17.5 Z" fill="#e08020"/></svg><div class="a t" style="left:29px;top:5px">发票识别</div></div>
<div class="a t" style="left:657px;top:404px;">识别技术</div>
<div class="a " style="left:711px;top:400px;width:118px;height:20px;background:#f7fce0;border:1px solid #9a9a88;"><div class="a t" style="left:2px;top:3px">百度<span class="n h">(</span>共用<span class="n h">)</span></div></div>
<div class="a " style="left:0px;top:432px;width:915px;height:1px;background:#a4a4a0;"></div>
<div class="a " style="left:0px;top:433px;width:915px;height:1px;background:#fdfdfb;"></div>
<div class="a " style="left:0px;top:434px;width:84px;height:28px;background:#f8f8f5;"></div>
<div class="a " style="left:84px;top:436px;width:82px;height:25px;background:#efefeb;border:1px solid #e2e2de;"></div>
<div class="a " style="left:166px;top:436px;width:70px;height:25px;background:#efefeb;border:1px solid #e2e2de;"></div>
<div class="a t" style="left:15px;top:442px;">发票对应</div>
<div class="a t" style="left:100px;top:444px;">内容明细</div>
<div class="a t" style="left:177px;top:444px;">其它信息</div>
<div class="a " style="left:0px;top:461px;width:914px;height:37px;background:linear-gradient(#fbfbf8,#e9e9e5);border-right:1px solid #a0a0a0;border-bottom:1px solid #929290;"></div>
<div class="a btnf" style="left:5px;top:469px;width:118px;height:24px;"><svg class="a" style="left:8px;top:2px" width="18" height="17" viewBox="0 0 18 17"><rect x="2" y="3" width="11" height="13" fill="#fffaf4" stroke="#1a70f0" stroke-width="2"/><path d="M4 10h7M4 12h7M4 14h7" stroke="#b8b8b8" stroke-width="0.8"/><path d="M1 2 H12 L17.5 7.5 H6.5 Z" fill="#1a70f0"/><path d="M3 2.5 H10 L12 4.5 H5 Z" fill="#70a0f8"/><path d="M4 0v2M6 0v2M8 0v2M10 0v2" stroke="#909090" stroke-width="0.8"/></svg><div class="a t" style="left:28px;top:6px">选择对应单据<span class="m" style="text-decoration:underline;font-size:12px;letter-spacing:-1.2px;top:0">S</span></div></div>
<div class="a btn" style="left:127px;top:469px;width:72px;height:24px;"><svg class="a" style="left:12px;top:5px" width="13" height="13" viewBox="0 0 13 13"><path d="M4.5 0.5h4v4h4v4h-4v4h-4v-4h-4v-4h4z" fill="#2a6ee8" stroke="#0a3aa0" stroke-width="0.8"/></svg><div class="a t" style="left:30px;top:6px">添加<span class="m" style="text-decoration:underline;font-size:12px;letter-spacing:-1.2px;top:0">A</span></div></div>
<div class="a btn" style="left:203px;top:469px;width:72px;height:24px;"><svg class="a" style="left:12px;top:9px" width="13" height="5" viewBox="0 0 13 5"><rect x="0.5" y="0.5" width="12" height="4" fill="#2a6ee8" stroke="#0a3aa0" stroke-width="0.8"/></svg><div class="a t" style="left:30px;top:6px">删除<span class="m" style="text-decoration:underline;font-size:12px;letter-spacing:-1.2px;top:0">D</span></div></div>
<div class="a btn" style="left:279px;top:469px;width:126px;height:24px;"><svg class="a" style="left:5px;top:3px" width="12" height="17" viewBox="0 0 12 17"><rect x="0.7" y="0.7" width="10.6" height="15.6" rx="2" fill="#cacaca" stroke="#000" stroke-width="1.4"/><rect x="2" y="3" width="8" height="3" fill="#000"/><circle cx="6" cy="4.5" r="0.8" fill="#20e0f0"/><circle cx="8" cy="4.5" r="0.8" fill="#20e0f0"/><g fill="#111"><circle cx="2.8" cy="8" r="0.7"/><circle cx="4.8" cy="8" r="0.7"/><circle cx="6.8" cy="8" r="0.7"/><circle cx="8.8" cy="8" r="0.7"/><circle cx="2.8" cy="10" r="0.7"/><circle cx="4.8" cy="10" r="0.7"/><circle cx="6.8" cy="10" r="0.7"/><circle cx="8.8" cy="10" r="0.7"/><circle cx="2.8" cy="12" r="0.7"/><circle cx="4.8" cy="12" r="0.7"/><circle cx="6.8" cy="12" r="0.7"/><circle cx="8.8" cy="12" r="0.7"/><circle cx="2.8" cy="14" r="0.7"/><circle cx="4.8" cy="14" r="0.7"/></g><rect x="6" y="13.3" width="3.5" height="1.4" fill="#f02020"/></svg><div class="a t" style="left:23px;top:6px">自动对应发票金额</div></div>
<div class="a btn" style="left:407px;top:469px;width:105px;height:24px;"><svg class="a" style="left:6px;top:6px" width="17" height="13" viewBox="0 0 17 13"><path d="M1 11.5 V2 L2 1 H5 L6 2 H11.5 L12.5 3 V5" fill="#eef8b0" stroke="#d08a18" stroke-width="1.3"/><path d="M1 11.5 L3.5 4.8 H15.8 L13 11.5 Z" fill="#eaf8a0" stroke="#d08a18" stroke-width="1.3"/></svg><div class="a t" style="left:26px;top:6px">查看原始单据</div></div>
<div class="a btn" style="left:515px;top:469px;width:104px;height:24px;"><svg class="a" style="left:6px;top:6px" width="17" height="13" viewBox="0 0 17 13"><path d="M1 11.5 V2 L2 1 H5 L6 2 H11.5 L12.5 3 V5" fill="#eef8b0" stroke="#d08a18" stroke-width="1.3"/><path d="M1 11.5 L3.5 4.8 H15.8 L13 11.5 Z" fill="#eaf8a0" stroke="#d08a18" stroke-width="1.3"/></svg><div class="a t" style="left:26px;top:6px">查看相关附件</div></div>
<div class="a btn" style="left:625px;top:469px;width:135px;height:24px;"><svg class="a" style="left:8px;top:3px" width="19" height="16" viewBox="0 0 19 16" shape-rendering="crispEdges"><rect x="6" y="0" width="2" height="1" fill="#000"/><rect x="8" y="0" width="2" height="1" fill="#f0b020"/><rect x="5" y="1" width="2" height="1" fill="#000"/><rect x="7" y="1" width="2" height="1" fill="#fff"/><rect x="9" y="1" width="2" height="1" fill="#f0b020"/><rect x="4" y="2" width="3" height="1" fill="#000"/><rect x="7" y="2" width="2" height="1" fill="#fff"/><rect x="9" y="2" width="1" height="1" fill="#000"/><rect x="10" y="2" width="2" height="1" fill="#f0b020"/><rect x="3" y="3" width="2" height="1" fill="#fff"/><rect x="5" y="3" width="2" height="1" fill="#000"/><rect x="7" y="3" width="2" height="1" fill="#fff"/><rect x="9" y="3" width="2" height="1" fill="#000"/><rect x="11" y="3" width="2" height="1" fill="#f0b020"/><rect x="3" y="4" width="2" height="1" fill="#fff"/><rect x="5" y="4" width="3" height="1" fill="#000"/><rect x="8" y="4" width="2" height="1" fill="#fff"/><rect x="10" y="4" width="2" height="1" fill="#000"/><rect x="12" y="4" width="2" height="1" fill="#f0b020"/><rect x="2" y="5" width="2" height="1" fill="#000"/><rect x="4" y="5" width="2" height="1" fill="#fff"/><rect x="6" y="5" width="2" height="1" fill="#000"/><rect x="8" y="5" width="2" height="1" fill="#fff"/><rect x="10" y="5" width="2" height="1" fill="#000"/><rect x="13" y="5" width="2" height="1" fill="#f0b020"/><rect x="2" y="6" width="2" height="1" fill="#000"/><rect x="4" y="6" width="2" height="1" fill="#fff"/><rect x="6" y="6" width="3" height="1" fill="#000"/><rect x="9" y="6" width="2" height="1" fill="#fff"/><rect x="11" y="6" width="1" height="1" fill="#000"/><rect x="14" y="6" width="2" height="1" fill="#f0b020"/><rect x="1" y="7" width="2" height="1" fill="#fff"/><rect x="3" y="7" width="2" height="1" fill="#000"/><rect x="5" y="7" width="2" height="1" fill="#fff"/><rect x="7" y="7" width="2" height="1" fill="#000"/><rect x="9" y="7" width="2" height="1" fill="#fff"/><rect x="11" y="7" width="1" height="1" fill="#000"/><rect x="15" y="7" width="2" height="1" fill="#f0b020"/><rect x="1" y="8" width="2" height="1" fill="#fff"/><rect x="3" y="8" width="2" height="1" fill="#000"/><rect x="5" y="8" width="3" height="1" fill="#fff"/><rect x="8" y="8" width="2" height="1" fill="#000"/><rect x="10" y="8" width="1" height="1" fill="#fff"/><rect x="11" y="8" width="1" height="1" fill="#000"/><rect x="16" y="8" width="1" height="1" fill="#f0b020"/><rect x="17" y="8" width="1" height="1" fill="#c04020"/><rect x="2" y="9" width="2" height="1" fill="#000"/><rect x="4" y="9" width="2" height="1" fill="#fff"/><rect x="6" y="9" width="2" height="1" fill="#000"/><rect x="8" y="9" width="2" height="1" fill="#fff"/><rect x="10" y="9" width="1" height="1" fill="#000"/><rect x="11" y="9" width="1" height="1" fill="#fff"/><rect x="2" y="10" width="3" height="1" fill="#000"/><rect x="5" y="10" width="2" height="1" fill="#fff"/><rect x="7" y="10" width="2" height="1" fill="#000"/><rect x="9" y="10" width="2" height="1" fill="#fff"/><rect x="11" y="10" width="1" height="1" fill="#000"/><rect x="3" y="11" width="2" height="1" fill="#fff"/><rect x="5" y="11" width="2" height="1" fill="#000"/><rect x="7" y="11" width="2" height="1" fill="#fff"/><rect x="9" y="11" width="2" height="1" fill="#000"/><rect x="4" y="12" width="1" height="1" fill="#fff"/><rect x="5" y="12" width="2" height="1" fill="#000"/><rect x="7" y="12" width="2" height="1" fill="#fff"/><rect x="9" y="12" width="2" height="1" fill="#000"/><rect x="5" y="13" width="2" height="1" fill="#000"/><rect x="7" y="13" width="2" height="1" fill="#fff"/><rect x="9" y="13" width="1" height="1" fill="#000"/><rect x="6" y="14" width="4" height="1" fill="#000"/><rect x="7" y="15" width="2" height="1" fill="#000"/></svg><div class="a t" style="left:28px;top:6px">相关单据明细汇总</div></div>
<div class="a " style="left:1px;top:498px;width:913px;height:161px;background:#fcfcf8;border-left:2px solid #8a8a88;border-right:1px solid #a0a0a0;border-bottom:1px solid #929290;"></div>
<div class="a " style="left:0px;top:498px;width:315px;height:18px;background:#f3f3ef;border-bottom:1px solid #a8a8a4;"></div>
<div class="a " style="left:314px;top:500px;width:1px;height:13px;background:#b8b8b4;"></div>
<div class="a " style="left:0px;top:516px;width:315px;height:19px;background:#eeeeea;border-right:1px solid #9c9c98;border-bottom:1px solid #9c9c98;"></div>
<div class="a t" style="left:258px;top:501px">对应单据</div>
<div class="a " style="left:315px;top:498px;width:94px;height:18px;background:#f3f3ef;border-bottom:1px solid #a8a8a4;"></div>
<div class="a " style="left:408px;top:500px;width:1px;height:13px;background:#b8b8b4;"></div>
<div class="a " style="left:315px;top:516px;width:94px;height:19px;background:#eeeeea;border-right:1px solid #9c9c98;border-bottom:1px solid #9c9c98;"></div>
<div class="a t" style="left:313px;width:94px;top:501px;text-align:center">对应发票金额</div>
<div class="a " style="left:409px;top:498px;width:65px;height:18px;background:#f3f3ef;border-bottom:1px solid #a8a8a4;"></div>
<div class="a " style="left:473px;top:500px;width:1px;height:13px;background:#b8b8b4;"></div>
<div class="a " style="left:409px;top:516px;width:65px;height:19px;background:#eeeeea;border-right:1px solid #9c9c98;border-bottom:1px solid #9c9c98;"></div>
<div class="a t" style="left:407px;width:65px;top:501px;text-align:center">备注</div>
<div class="a " style="left:474px;top:498px;width:74px;height:18px;background:#f3f3ef;border-bottom:1px solid #a8a8a4;"></div>
<div class="a " style="left:547px;top:500px;width:1px;height:13px;background:#b8b8b4;"></div>
<div class="a " style="left:474px;top:516px;width:74px;height:19px;background:#eeeeea;border-right:1px solid #9c9c98;border-bottom:1px solid #9c9c98;"></div>
<div class="a t" style="left:472px;width:74px;top:501px;text-align:center">单据金额</div>
<div class="a " style="left:548px;top:498px;width:115px;height:18px;background:#f3f3ef;border-bottom:1px solid #a8a8a4;"></div>
<div class="a " style="left:662px;top:500px;width:1px;height:13px;background:#b8b8b4;"></div>
<div class="a " style="left:548px;top:516px;width:115px;height:19px;background:#eeeeea;border-right:1px solid #9c9c98;border-bottom:1px solid #9c9c98;"></div>
<div class="a t" style="left:546px;width:115px;top:501px;text-align:center">单据已对应</div>
<div class="a " style="left:663px;top:498px;width:80px;height:18px;background:#f3f3ef;border-bottom:1px solid #a8a8a4;"></div>
<div class="a " style="left:742px;top:500px;width:1px;height:13px;background:#b8b8b4;"></div>
<div class="a " style="left:663px;top:516px;width:80px;height:19px;background:#eeeeea;border-right:1px solid #9c9c98;border-bottom:1px solid #9c9c98;"></div>
<div class="a t" style="left:661px;width:80px;top:501px;text-align:center">对应用户单号</div>
<div class="a " style="left:743px;top:498px;width:79px;height:18px;background:#f3f3ef;border-bottom:1px solid #a8a8a4;"></div>
<div class="a " style="left:821px;top:500px;width:1px;height:13px;background:#b8b8b4;"></div>
<div class="a " style="left:743px;top:516px;width:79px;height:19px;background:#eeeeea;border-right:1px solid #9c9c98;border-bottom:1px solid #9c9c98;"></div>
<div class="a t" style="left:741px;width:79px;top:501px;text-align:center">发票类别</div>
<div class="a " style="left:822px;top:498px;width:81px;height:18px;background:#f3f3ef;border-bottom:1px solid #a8a8a4;"></div>
<div class="a " style="left:902px;top:500px;width:1px;height:13px;background:#b8b8b4;"></div>
<div class="a " style="left:822px;top:516px;width:81px;height:19px;background:#eeeeea;border-right:1px solid #9c9c98;border-bottom:1px solid #9c9c98;"></div>
<div class="a t" style="left:820px;width:81px;top:501px;text-align:center">合同编号</div>
<div class="a t" style="left:257px;top:519px"><span class="n">221219001</span></div>
<div class="a t" style="right:510px;top:519px;text-align:right;"><span class="n">700</span><span class="n p">.</span><span class="n">14</span></div>
<div class="a t" style="right:371px;top:519px;text-align:right;"><span class="n">700</span><span class="n p">.</span><span class="n">14</span></div>
<div class="a t" style="right:256px;top:519px;text-align:right;"><span class="n">0</span><span class="n p">.</span><span class="n">00</span></div>
<div class="a btn" style="left:190px;top:668px;width:75px;height:24px;"></div>
<div class="a btn" style="left:510px;top:668px;width:87px;height:24px;"><svg class="a" style="left:20px;top:1px" width="19" height="21" viewBox="0 0 19 21"><path d="M1.5 12.5 L6.5 17.5 L17 6.5" fill="none" stroke="#000080" stroke-width="4.5"/><path d="M1.5 11.5 L6.5 16.5 L16.5 5.5" fill="none" stroke="#109010" stroke-width="4"/><path d="M1.5 9.5 L6.5 14.5 L17 3.5" fill="none" stroke="#000080" stroke-width="4"/><path d="M1.5 8.5 L6.5 13.5 L16.5 2.5" fill="none" stroke="#109a10" stroke-width="3.6"/><path d="M2 8.8 L6.5 13.2 L16.5 2.8" fill="none" stroke="#40f040" stroke-width="0.9"/><path d="M2 11.8 L6.5 16.2 L16.5 5.8" fill="none" stroke="#40f040" stroke-width="0.9"/></svg><div class="a t" style="left:42px;top:6px">保存</div></div>
<div class="a btn" style="left:615px;top:668px;width:87px;height:24px;"><svg class="a" style="left:19px;top:2px" width="18" height="18" viewBox="0 0 18 18"><rect x="7.5" y="2.5" width="3.5" height="12" fill="#f0e070" stroke="#d09020"/><path d="M1.5 3 L7.5 1 V16.5 L1.5 14.5 Z" fill="#98ccf8" stroke="#7060b8"/><rect x="5.8" y="1.5" width="1.5" height="14.5" fill="#fff"/><circle cx="3.5" cy="8.5" r="0.9" fill="#7060b8"/><path d="M9 7.5 L13 3.5 V6 H16.5 V9 H13 V11.5 Z" fill="#1a70f0"/></svg><div class="a t" style="left:40px;top:6px">关闭</div></div>
<div class="a" style="left:0;top:698px;width:915px;height:62px;overflow:hidden">
<div class="a" style="left:266px;top:-9px;width:114px;height:20px;background:#fdfdfa;border:1px solid #e0e0e0;border-bottom:1px solid #7c7c7c;border-radius:2px"></div>
<div class="a t" style="left:389px;top:-4px">对应合同类别</div>
<div class="a cb" style="left:470px;top:-9px;width:86px;height:20px;border-color:#cfcfcf;"><svg class="a" style="right:3px;top:7px" width="10" height="6" viewBox="0 0 10 6"><path d="M1 1 L5 5 L9 1" fill="none" stroke="#555" stroke-width="1.2"/></svg></div>
<div class="a t" style="left:563px;top:-4px">合同编号</div>
<div class="a" style="left:616px;top:-9px;width:96px;height:20px;background:#fdfdfa;border:1px solid #e0e0e0;border-bottom:1px solid #7c7c7c;border-radius:2px"></div>
<div class="a cb" style="left:266px;top:19px;width:114px;height:20px;border-color:#cfcfcf;"><svg class="a" style="right:3px;top:7px" width="10" height="6" viewBox="0 0 10 6"><path d="M1 1 L5 5 L9 1" fill="none" stroke="#555" stroke-width="1.2"/></svg></div>
<div class="a t" style="left:388px;top:23px">项目经理</div>
<div class="a cb" style="left:444px;top:19px;width:112px;height:20px;border-color:#cfcfcf;"><svg class="a" style="right:3px;top:7px" width="10" height="6" viewBox="0 0 10 6"><path d="M1 1 L5 5 L9 1" fill="none" stroke="#555" stroke-width="1.2"/></svg></div>
<div class="a t" style="left:563px;top:23px">归属分类</div>
<div class="a cb" style="left:616px;top:19px;width:96px;height:20px;"><svg class="a" style="right:3px;top:7px" width="10" height="6" viewBox="0 0 10 6"><path d="M1 1 L5 5 L9 1" fill="none" stroke="#555" stroke-width="1.2"/></svg></div>
<div class="a cb" style="left:266px;top:47px;width:114px;height:20px;"><svg class="a" style="right:3px;top:7px" width="10" height="6" viewBox="0 0 10 6"><path d="M1 1 L5 5 L9 1" fill="none" stroke="#555" stroke-width="1.2"/></svg></div>
<div class="a t" style="left:388px;top:51px">开具单位</div>
<div class="a" style="left:444px;top:47px;width:87px;height:20px;background:#fdfdfa;border:1px solid #e0e0e0;border-bottom:1px solid #7c7c7c;border-radius:2px"></div>
<div class="a btn" style="left:531px;top:47px;width:24px;height:22px"><div class="a" style="left:3px;top:6px"><svg class="a" style="left:0px;top:0px" width="16" height="10" viewBox="0 0 16 10" shape-rendering="crispEdges"><rect x="7" y="0" width="3" height="1" fill="#000"/><rect x="6" y="1" width="1" height="1" fill="#000"/><rect x="7" y="1" width="2" height="1" fill="#d4f000"/><rect x="9" y="1" width="1" height="1" fill="#fbfff0"/><rect x="10" y="1" width="1" height="1" fill="#d4f000"/><rect x="11" y="1" width="5" height="1" fill="#000"/><rect x="1" y="2" width="8" height="1" fill="#000"/><rect x="9" y="2" width="1" height="1" fill="#fbfff0"/><rect x="10" y="2" width="1" height="1" fill="#d4f000"/><rect x="11" y="2" width="1" height="1" fill="#000"/><rect x="12" y="2" width="1" height="1" fill="#00e0f0"/><rect x="13" y="2" width="3" height="1" fill="#000"/><rect x="0" y="3" width="1" height="1" fill="#000"/><rect x="1" y="3" width="1" height="1" fill="#d4f000"/><rect x="2" y="3" width="1" height="1" fill="#fbfff0"/><rect x="3" y="3" width="1" height="1" fill="#d4f000"/><rect x="4" y="3" width="1" height="1" fill="#fbfff0"/><rect x="5" y="3" width="1" height="1" fill="#d4f000"/><rect x="6" y="3" width="1" height="1" fill="#fbfff0"/><rect x="7" y="3" width="1" height="1" fill="#d4f000"/><rect x="8" y="3" width="1" height="1" fill="#fbfff0"/><rect x="9" y="3" width="1" height="1" fill="#d4f000"/><rect x="10" y="3" width="1" height="1" fill="#fbfff0"/><rect x="11" y="3" width="1" height="1" fill="#000"/><rect x="12" y="3" width="1" height="1" fill="#00e0f0"/><rect x="13" y="3" width="3" height="1" fill="#000"/><rect x="1" y="4" width="6" height="1" fill="#000"/><rect x="7" y="4" width="1" height="1" fill="#fbfff0"/><rect x="8" y="4" width="1" height="1" fill="#d4f000"/><rect x="9" y="4" width="1" height="1" fill="#fbfff0"/><rect x="10" y="4" width="1" height="1" fill="#d4f000"/><rect x="11" y="4" width="1" height="1" fill="#000"/><rect x="12" y="4" width="1" height="1" fill="#00e0f0"/><rect x="13" y="4" width="3" height="1" fill="#000"/><rect x="3" y="5" width="1" height="1" fill="#000"/><rect x="4" y="5" width="1" height="1" fill="#d4f000"/><rect x="5" y="5" width="1" height="1" fill="#fbfff0"/><rect x="6" y="5" width="1" height="1" fill="#d4f000"/><rect x="7" y="5" width="1" height="1" fill="#fbfff0"/><rect x="8" y="5" width="1" height="1" fill="#d4f000"/><rect x="9" y="5" width="1" height="1" fill="#fbfff0"/><rect x="10" y="5" width="1" height="1" fill="#d4f000"/><rect x="11" y="5" width="1" height="1" fill="#000"/><rect x="12" y="5" width="1" height="1" fill="#00e0f0"/><rect x="13" y="5" width="3" height="1" fill="#000"/><rect x="4" y="6" width="3" height="1" fill="#000"/><rect x="7" y="6" width="1" height="1" fill="#d4f000"/><rect x="8" y="6" width="1" height="1" fill="#fbfff0"/><rect x="9" y="6" width="1" height="1" fill="#d4f000"/><rect x="10" y="6" width="1" height="1" fill="#fbfff0"/><rect x="11" y="6" width="1" height="1" fill="#000"/><rect x="12" y="6" width="1" height="1" fill="#00e0f0"/><rect x="13" y="6" width="3" height="1" fill="#000"/><rect x="4" y="7" width="1" height="1" fill="#000"/><rect x="5" y="7" width="1" height="1" fill="#d4f000"/><rect x="6" y="7" width="1" height="1" fill="#fbfff0"/><rect x="7" y="7" width="1" height="1" fill="#d4f000"/><rect x="8" y="7" width="1" height="1" fill="#fbfff0"/><rect x="9" y="7" width="1" height="1" fill="#d4f000"/><rect x="10" y="7" width="1" height="1" fill="#fbfff0"/><rect x="11" y="7" width="1" height="1" fill="#000"/><rect x="12" y="7" width="1" height="1" fill="#00e0f0"/><rect x="13" y="7" width="3" height="1" fill="#000"/><rect x="5" y="8" width="5" height="1" fill="#000"/><rect x="11" y="8" width="3" height="1" fill="#000"/><rect x="14" y="8" width="1" height="1" fill="#d4f000"/><rect x="15" y="8" width="1" height="1" fill="#000"/><rect x="13" y="9" width="3" height="1" fill="#000"/></svg></div></div>
<div class="a t" style="left:563px;top:51px">查询部门</div>
<div class="a cb" style="left:616px;top:47px;width:96px;height:20px;"><svg class="a" style="right:3px;top:7px" width="10" height="6" viewBox="0 0 10 6"><path d="M1 1 L5 5 L9 1" fill="none" stroke="#555" stroke-width="1.2"/></svg></div>
</div>
<div class="a menu" style="left:4px;top:494px;width:255px;height:280px;background:#f9f9f7;border:1px solid #dadada;border-radius:8px;box-shadow:1px 2px 4px rgba(0,0,0,0.12)">
<div class="a" style="left:37px;top:5px;font-size:12px;line-height:14px;white-space:nowrap">外包人工单(O)</div>
<div class="a" style="left:37px;top:27px;font-size:12px;line-height:14px;white-space:nowrap">外包机械单(P)</div>
<div class="a" style="left:37px;top:49px;font-size:12px;line-height:14px;white-space:nowrap">材料采购单(Q)</div>
<div class="a" style="left:37px;top:71px;font-size:12px;line-height:14px;white-space:nowrap">租赁结算单(R)</div>
<div class="a" style="left:37px;top:93px;font-size:12px;line-height:14px;white-space:nowrap">设备采购单(S)</div>
<div class="a" style="left:37px;top:115px;font-size:12px;line-height:14px;white-space:nowrap">其它费用单(T)</div>
<div class="a" style="left:37px;top:137px;font-size:12px;line-height:14px;white-space:nowrap">运输车辆单(U)</div>
<div class="a" style="left:37px;top:159px;font-size:12px;line-height:14px;white-space:nowrap">设备维修单(V)</div>
<div class="a" style="left:37px;top:181px;font-size:12px;line-height:14px;white-space:nowrap">材料退货单(W)</div>
<div class="a" style="left:37px;top:203px;font-size:12px;line-height:14px;white-space:nowrap">材料甲供单(X)</div>
<div class="a" style="left:37px;top:225px;font-size:12px;line-height:14px;white-space:nowrap">物资入库单(Y)</div>
<div class="a" style="left:40px;top:247px;width:205px;height:1px;background:#d4d4d4"></div>
<div class="a" style="left:37px;top:255px;font-size:12px;line-height:14px;white-space:nowrap">根据合同自动生成对应单据(Z)</div>
</div>
</body></html>
